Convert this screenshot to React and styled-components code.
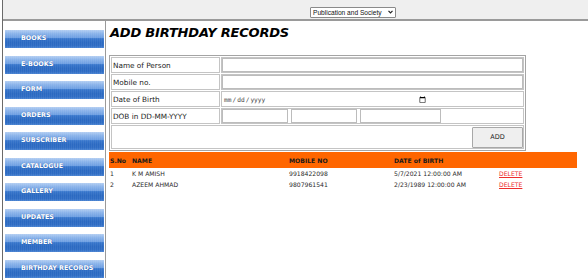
import React from "react";
import styled, { createGlobalStyle } from "styled-components";

const Global = createGlobalStyle`
  html, body { margin: 0; padding: 0; background: #fff; }
  body { font-family: "DejaVu Sans", Verdana, sans-serif; }
`;

const Page = styled.div`
  margin-left: 2px;
  border-left: 1px solid #6a6a6a;
  min-height: 280px;
  box-sizing: border-box;
`;

const TopBar = styled.div`
  height: 21px;
  background: #efefef;
  border-bottom: 2px solid #9a9a9a;
  display: flex;
  align-items: flex-start;
  padding: 7px 0 0 307px;
  box-sizing: border-box;
`;

const SelectWrap = styled.div`
  position: relative;
  width: 86px;
  height: 11px;
`;

const Select = styled.select`
  appearance: none;
  -webkit-appearance: none;
  display: block;
  width: 86px;
  height: 11px;
  box-sizing: border-box;
  font-family: "Liberation Sans", Arial, sans-serif;
  font-size: 6.6px;
  line-height: 9px;
  padding: 0 8px 0 2px;
  border: 1px solid #8a8a8a;
  border-radius: 1px;
  background: #fff;
  color: #111;
`;

const Chevron = styled.svg`
  position: absolute;
  right: 3px;
  top: 3px;
  width: 5px;
  height: 4px;
  pointer-events: none;
`;

const Body = styled.div`
  display: flex;
  align-items: stretch;
`;

const Sidebar = styled.nav`
  width: 103px;
  border-right: 1px solid #9a9a9a;
  padding: 9px 0 0 2px;
  min-height: 257px;
  display: flex;
  flex-direction: column;
  gap: 7.5px;
  box-sizing: border-box;
`;

const NavButton = styled.a`
  display: flex;
  align-items: center;
  width: 99px;
  height: 18px;
  padding: 0 0 2px 16px;
  box-sizing: border-box;
  background:
    repeating-linear-gradient(to right, rgba(255,255,255,0.06) 0 1px, transparent 1px 2px),
    linear-gradient(to bottom, #b3cef2 0%, #8ab3ea 20%, #6e9fe2 42%, #3675cb 48%, #2b69c1 70%, #2e6cc4 88%, #4a84d2 100%);
  color: #fff;
  font-weight: bold;
  font-size: 6.4px;
  text-shadow: 0 0 1px rgba(20, 60, 140, 0.7);
  text-decoration: none;
  white-space: nowrap;
`;

const Main = styled.main`
  flex: 1;
  padding: 4px 0 0 3px;
`;

const Title = styled.h1`
  margin: 0 0 14px 1px;
  font-size: 13px;
  line-height: 16px;
  font-weight: bold;
  font-style: italic;
  letter-spacing: -0.2px;
  color: #000;
`;

const FormTable = styled.table`
  width: 417px;
  border: 1px solid #a4a4a4;
  border-spacing: 1px;
  border-collapse: separate;
  font-size: 7.3px;
  color: #222;
  margin-bottom: 1px;
`;

const Cell = styled.td`
  border: 1px solid #c4c4c4;
  padding: 0;
  height: ${(p) => (p.$tall ? "22px" : "14px")};
  width: ${(p) => (p.$label ? "106px" : "auto")};
  padding-left: ${(p) => (p.$label ? "1px" : "0")};
  text-align: ${(p) => (p.$right ? "right" : "left")};
  vertical-align: middle;
  white-space: nowrap;
`;

const TextInput = styled.input`
  display: block;
  box-sizing: border-box;
  width: ${(p) => p.$w || "100%"};
  height: 14px;
  margin: 0;
  border: 1px solid #bcbcbc;
  padding: 0 2px;
  font-size: 7px;
  background: #fff;
`;

const DateInput = styled.input`
  display: block;
  box-sizing: border-box;
  width: 206px;
  height: 14px;
  margin: 0;
  border: none;
  padding: 0 2px 0 1px;
  font-family: "DejaVu Sans Mono", monospace;
  font-size: 6.2px;
  color: #444;
  background: #fff;
  &::-webkit-calendar-picker-indicator {
    width: 7px;
    height: 7px;
    padding: 0;
    margin: 0;
  }
`;

const InputGroup = styled.div`
  display: flex;
  gap: 3px;
`;

const AddButton = styled.button`
  width: 51px;
  height: 21px;
  margin: 0 0 0 auto;
  display: block;
  background: #efefef;
  border: 1px solid #a8a8a8;
  border-radius: 1px;
  font-family: "DejaVu Sans", Verdana, sans-serif;
  font-size: 6.5px;
  color: #222;
  padding: 0;
`;

const Records = styled.div`
  width: 468px;
  font-size: 6.1px;
  color: #2a2a2a;
`;

const Row = styled.div`
  display: grid;
  grid-template-columns: 22px 157px 105px 105px 1fr;
  align-items: center;
  height: ${(p) => (p.$head ? "16px" : "11px")};
  background: ${(p) => (p.$head ? "#ff6600" : "transparent")};
  font-weight: ${(p) => (p.$head ? "bold" : "normal")};
  color: ${(p) => (p.$head ? "#1a1a1a" : "#2a2a2a")};
  & > span {
    padding-left: 1px;
    white-space: nowrap;
  }
`;

const DeleteLink = styled.a`
  color: #ee2c2c;
  text-decoration: underline;
  cursor: pointer;
`;

const navItems = [
  "BOOKS",
  "E-BOOKS",
  "FORM",
  "ORDERS",
  "SUBSCRIBER",
  "CATALOGUE",
  "GALLERY",
  "UPDATES",
  "MEMBER",
  "BIRTHDAY RECORDS",
];

const records = [
  { no: 1, name: "K M AMISH", mobile: "9918422098", dob: "5/7/2021 12:00:00 AM" },
  { no: 2, name: "AZEEM AHMAD", mobile: "9807961541", dob: "2/23/1989 12:00:00 AM" },
];

export default function App() {
  return (
    <>
      <Global />
      <Page>
        <TopBar>
          <SelectWrap>
            <Select defaultValue="pub">
              <option value="pub">Publication and Society</option>
            </Select>
            <Chevron viewBox="0 0 5 4">
              <path d="M0.5 0.8 L2.5 2.8 L4.5 0.8" fill="none" stroke="#222" strokeWidth="1.2" />
            </Chevron>
          </SelectWrap>
        </TopBar>
        <Body>
          <Sidebar>
            {navItems.map((item) => (
              <NavButton key={item}>{item}</NavButton>
            ))}
          </Sidebar>
          <Main>
            <Title>ADD BIRTHDAY RECORDS</Title>
            <FormTable>
              <tbody>
                <tr>
                  <Cell $label>Name of Person</Cell>
                  <Cell><TextInput type="text" /></Cell>
                </tr>
                <tr>
                  <Cell $label>Mobile no.</Cell>
                  <Cell><TextInput type="text" /></Cell>
                </tr>
                <tr>
                  <Cell $label>Date of Birth</Cell>
                  <Cell><DateInput type="date" /></Cell>
                </tr>
                <tr>
                  <Cell $label>DOB in DD-MM-YYYY</Cell>
                  <Cell>
                    <InputGroup>
                      <TextInput type="text" $w="66px" />
                      <TextInput type="text" $w="66px" />
                      <TextInput type="text" $w="81px" />
                    </InputGroup>
                  </Cell>
                </tr>
                <tr>
                  <Cell colSpan={2} $tall $right>
                    <AddButton type="button">ADD</AddButton>
                  </Cell>
                </tr>
              </tbody>
            </FormTable>
            <Records>
              <Row $head>
                <span>S.No</span>
                <span>NAME</span>
                <span>MOBILE NO</span>
                <span>DATE of BIRTH</span>
                <span></span>
              </Row>
              {records.map((r) => (
                <Row key={r.no}>
                  <span>{r.no}</span>
                  <span>{r.name}</span>
                  <span>{r.mobile}</span>
                  <span>{r.dob}</span>
                  <span><DeleteLink>DELETE</DeleteLink></span>
                </Row>
              ))}
            </Records>
          </Main>
        </Body>
      </Page>
    </>
  );
}
